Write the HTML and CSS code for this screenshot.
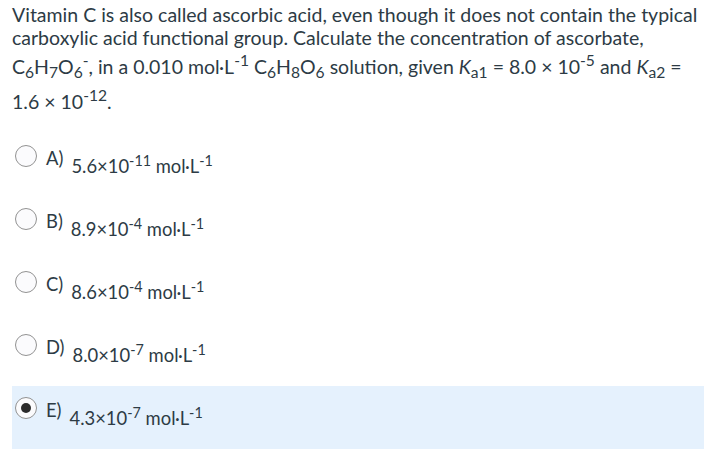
FILE: index.html
```html
<!DOCTYPE html>
<html>
<head>
<meta charset="utf-8">
<link rel="stylesheet" href="styles.css">
</head>
<body>
<div class="question">
  <p class="stem">Vitamin C is also called ascorbic acid, even though it does not contain the typical carboxylic acid functional group. Calculate the concentration of ascorbate, C<sub>6</sub>H<sub>7</sub>O<sub>6</sub><sup>-</sup>, in a 0.010 mol·L<sup>-1</sup> C<sub>6</sub>H<sub>8</sub>O<sub>6</sub> solution, given <i>K</i><sub>a1</sub> = 8.0 × 10<sup>-5</sup> and <i>K</i><sub>a2</sub> = 1.6 × 10<sup>-12</sup>.</p>
  <div class="answers">
    <div class="answer"><span class="radio"></span><span class="label">A)</span><span class="val">5.6×10<sup>-11</sup> mol·L<sup>-1</sup></span></div>
    <div class="answer"><span class="radio"></span><span class="label">B)</span><span class="val">8.9×10<sup>-4</sup> mol·L<sup>-1</sup></span></div>
    <div class="answer"><span class="radio"></span><span class="label">C)</span><span class="val">8.6×10<sup>-4</sup> mol·L<sup>-1</sup></span></div>
    <div class="answer"><span class="radio"></span><span class="label">D)</span><span class="val">8.0×10<sup>-7</sup> mol·L<sup>-1</sup></span></div>
    <div class="answer selected"><span class="radio checked"></span><span class="label">E)</span><span class="val">4.3×10<sup>-7</sup> mol·L<sup>-1</sup></span></div>
  </div>
</div>
</body>
</html>
```
FILE: styles.css
```css
html, body {
  margin: 0;
  padding: 0;
  background: #ffffff;
}
body {
  font-family: Lato, "Open Sans", sans-serif;
  color: #2d3b45;
}
.question {
  padding: 3px 0 0 12px;
}
.stem {
  margin: 0;
  font-size: 19.5px;
  line-height: 23px;
  padding-right: 2px;
}
.stem sub, .stem sup {
  font-size: 80%;
}
.answers {
  margin-top: 21px;
  display: flex;
  flex-direction: column;
}
.answer {
  height: 63px;
  display: flex;
  align-items: flex-start;
  padding-top: 11px;
  box-sizing: border-box;
  font-size: 18.4px;
}
.answer.selected {
  background: #e5f1fd;
}
.radio {
  width: 20px;
  height: 20px;
  border: 1px solid #929292;
  border-radius: 50%;
  background: #fbfbfd;
  margin: 0 9px 0 3px;
  flex: none;
  display: flex;
  align-items: center;
  justify-content: center;
}
.radio.checked::after {
  content: "";
  width: 10px;
  height: 10px;
  border-radius: 50%;
  background: #2b2b2b;
}
.label {
  margin-right: 8px;
  line-height: 22px;
  margin-top: 2px;
}
.val {
  line-height: 22px;
  margin-top: 5px;
}
.val sup {
  font-size: 78%;
}
```
